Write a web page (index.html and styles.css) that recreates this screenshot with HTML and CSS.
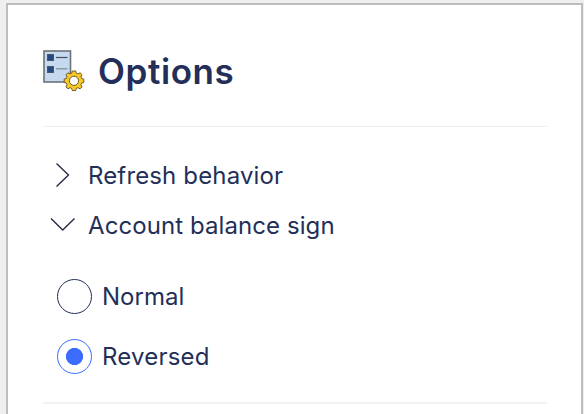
FILE: index.html
```html
<!DOCTYPE html>
<html lang="en">

<head>
    <meta charset="UTF-8">
    <meta name="viewport" content="width=device-width, initial-scale=1.0">
    <title>Options</title>
    <link rel="stylesheet" href="styles.css">
</head>

<body>
    <div class="panel">
        <header class="header">
            <svg class="logo" width="43" height="43" viewBox="0 0 43 43">
                <rect x="1" y="1" width="26.500" height="31" fill="#c5d9ef" stroke="#6b7279" stroke-width="1.600"/>
                <g fill="#26497f" stroke="#4b5661">
                    <rect x="4.500" y="4.500" width="6" height="6"/>
                    <rect x="4.500" y="16.500" width="6" height="6"/>
                </g>
                <path d="M13 7.500h11.500" stroke="#46505c" stroke-width="1.200"/>
                <path d="M13 18.800h11.500" stroke="#7b8a98" stroke-width="1.200"/>
                <g transform="translate(31 30.800)" stroke="#6e5a28" stroke-width="1" stroke-linejoin="round">
                    <path fill="#fbc926" d="M-1.700 -9.800H1.700L2.300 -7.600L3.900 -6.900L6.100 -8L8 -6.100L6.900 -3.900L7.600 -2.300L9.800 -1.700V1.700L7.600 2.300L6.900 3.900L8 6.100L6.100 8L3.900 6.900L2.300 7.600L1.700 9.800H-1.700L-2.300 7.600L-3.900 6.900L-6.100 8L-8 6.100L-6.900 3.900L-7.600 2.300L-9.800 1.700V-1.700L-7.600 -2.300L-6.900 -3.900L-8 -6.100L-6.100 -8L-3.900 -6.900L-2.300 -7.600Z"/>
                    <circle r="4.600" fill="#fff"/>
                </g>
            </svg>
            <h1>Options</h1>
        </header>

        <section class="settings">
            <div class="row">
                <svg class="chevron" width="26" height="26" viewBox="0 0 26 26">
                    <path d="M6.500 1.500L18.500 13L6.500 24.500"/>
                </svg>
                <span class="refresh">Refresh behavior</span>
            </div>
            <div class="row">
                <svg class="chevron" width="26" height="26" viewBox="0 0 26 26">
                    <path d="M1 6.500L12.700 18L24.500 6.500"/>
                </svg>
                <span class="balance">Account balance sign</span>
            </div>
            <div class="choices">
                <label class="choice">
                    <input type="radio" name="sign" value="normal">
                    <span class="normal">Normal</span>
                </label>
                <label class="choice">
                    <input type="radio" name="sign" value="reversed" checked>
                    <span class="reversed">Reversed</span>
                </label>
            </div>
        </section>
    </div>
</body>

</html>
```

FILE: styles.css
```css
* {
    box-sizing: border-box;
}

body {
    margin: 0;
    padding: 3px 1px 0 6px;
    height: 414px;
    background: #efefef;
    color: #232f58;
    font-family: Inter, "Liberation Sans", sans-serif;
}

.panel {
    height: 411px;
    padding: 0 34px 0 35px;
    border: 2px solid #bdbdbd;
    border-bottom: 0;
    background: #fff;
}

.header {
    display: flex;
    gap: 12px;
    height: 122px;
    padding-top: 45px;
    border-bottom: 1px solid #eee;
}

.logo {
    flex: none;
}

h1 {
    margin: 0;
    font-size: 35px;
    font-weight: 600;
    line-height: 43px;
    letter-spacing: 0.6px;
}

.settings {
    height: 277px;
    padding-top: 23px;
    border-bottom: 2px solid #f1f1f1;
}

.row {
    display: flex;
    align-items: center;
    gap: 12px;
    height: 50px;
    padding-left: 7px;
    font-size: 24px;
}

.refresh {
    letter-spacing: 0.14px;
}

.balance {
    letter-spacing: 0.08px;
}

.chevron {
    fill: none;
    stroke: #252c45;
    stroke-width: 1.4;
}

.choices {
    padding: 16px 0 0 14px;
}

.choice {
    display: flex;
    align-items: center;
    gap: 10px;
    height: 60px;
    font-size: 24px;
}

.reversed {
    letter-spacing: 0.2px;
}

.choice input {
    appearance: none;
    flex: none;
    width: 35px;
    height: 35px;
    margin: 0;
    border: 1px solid #232f58;
    border-radius: 50%;
}

.choice input:checked {
    border-color: #3b6cff;
    background: radial-gradient(circle, #3b6cff 8.3px, transparent 8.8px);
}
```
